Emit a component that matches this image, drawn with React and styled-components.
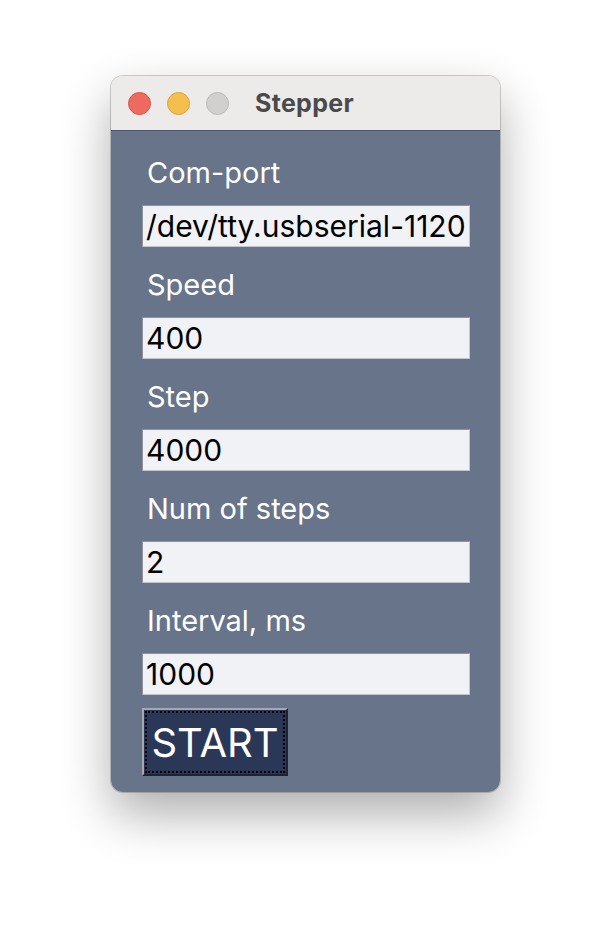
import React from "react";
import styled, { createGlobalStyle } from "styled-components";

const GlobalStyle = createGlobalStyle`
  html, body {
    margin: 0;
    padding: 0;
    background: #ffffff;
  }
  body {
    font-family: Inter, "Noto Sans", sans-serif;
  }
`;

const Page = styled.div`
  width: 612px;
  height: 940px;
  padding: 76px 0 0 111px;
  box-sizing: border-box;
`;

const Window = styled.div`
  width: 389px;
  height: 716px;
  border-radius: 12px;
  overflow: hidden;
  display: flex;
  flex-direction: column;
  box-shadow: 0 0 0 1px rgba(0, 0, 0, 0.18), 0 22px 50px rgba(0, 0, 0, 0.32);
`;

const TitleBar = styled.div`
  height: 55px;
  flex: none;
  background: #ecebe9;
  border-bottom: 1px solid #4b566a;
  display: flex;
  align-items: center;
  padding-left: 17px;
  box-sizing: border-box;
`;

const Lights = styled.div`
  display: flex;
  gap: 16px;
`;

const Light = styled.span`
  width: 23px;
  height: 23px;
  border-radius: 50%;
  box-sizing: border-box;
  background: ${(p) => p.$fill};
  border: 1px solid ${(p) => p.$edge};
`;

const Title = styled.div`
  margin-left: 26px;
  font-family: Inter, sans-serif;
  font-weight: 700;
  font-size: 25px;
  letter-spacing: 0.3px;
  color: #4a4a4a;
`;

const Body = styled.div`
  flex: 1;
  background: #67748a;
  padding: 18px 30px 0 31px;
  display: flex;
  flex-direction: column;
  align-items: flex-start;
`;

const Label = styled.div`
  height: 48px;
  line-height: 48px;
  margin-bottom: 8px;
  padding-left: 5px;
  font-size: 29px;
  color: #ffffff;
`;

const Input = styled.input`
  width: 328px;
  height: 42px;
  box-sizing: border-box;
  margin: 0 0 14px;
  padding: 0 0 0 3px;
  background: #f1f2f6;
  border: 1px solid;
  border-color: #8e939c #c2c6cc #c2c6cc #8e939c;
  font-family: Inter, sans-serif;
  font-size: 30px;
  color: #000000;
  outline: none;
`;

const Button = styled.button`
  margin-top: -1px;
  width: 146px;
  height: 68px;
  box-sizing: border-box;
  position: relative;
  background: #2a3756;
  border: 2px solid;
  border-color: #a3a9b4 #1b2337 #1b2337 #a3a9b4;
  padding: 0;
  font-family: Inter, sans-serif;
  font-size: 40px;
  color: #ffffff;
  cursor: pointer;

  &::after {
    content: "";
    position: absolute;
    inset: 1px;
    border: 2px dotted #000000;
  }
`;

const fields = [
  ["Com-port", "/dev/tty.usbserial-1120"],
  ["Speed", "400"],
  ["Step", "4000"],
  ["Num of steps", "2"],
  ["Interval, ms", "1000"],
];

export default function App() {
  return (
    <Page>
      <GlobalStyle />
      <Window>
        <TitleBar>
          <Lights>
            <Light $fill="#ee6a5f" $edge="#d8554b" />
            <Light $fill="#f5bf4f" $edge="#d8a23d" />
            <Light $fill="#d1d0ce" $edge="#bab9b7" />
          </Lights>
          <Title>Stepper</Title>
        </TitleBar>
        <Body>
          {fields.map(([label, value]) => (
            <React.Fragment key={label}>
              <Label>{label}</Label>
              <Input defaultValue={value} />
            </React.Fragment>
          ))}
          <Button>START</Button>
        </Body>
      </Window>
    </Page>
  );
}
